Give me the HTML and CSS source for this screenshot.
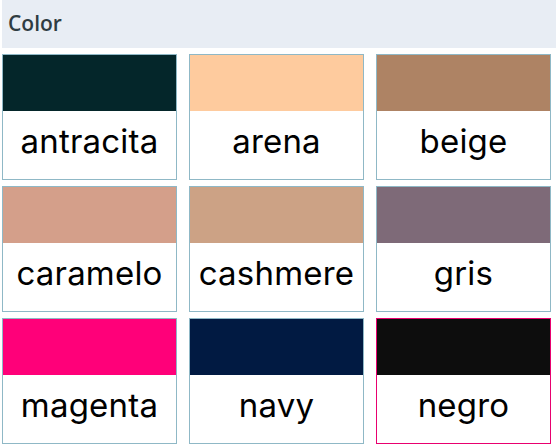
FILE: index.html
```html
<!DOCTYPE html>
<html lang="es">
<head>
    <meta charset="UTF-8">
    <meta name="viewport" content="width=device-width, initial-scale=1.0">
    <title>Color</title>
    <link rel="stylesheet" href="styles.css">
</head>
<body>
    <div class="filter">
        <div class="filter-title">Color</div>
        <div class="swatches">
            <div class="swatch"><div class="chip" style="background:#04262a"></div><div class="name">antracita</div></div>
            <div class="swatch"><div class="chip" style="background:#fecb9e"></div><div class="name">arena</div></div>
            <div class="swatch"><div class="chip" style="background:#ae8364"></div><div class="name">beige</div></div>
            <div class="swatch"><div class="chip" style="background:#d49f8a"></div><div class="name">caramelo</div></div>
            <div class="swatch"><div class="chip" style="background:#cca285"></div><div class="name">cashmere</div></div>
            <div class="swatch"><div class="chip" style="background:#7e6a78"></div><div class="name">gris</div></div>
            <div class="swatch"><div class="chip" style="background:#ff0079"></div><div class="name">magenta</div></div>
            <div class="swatch"><div class="chip" style="background:#011a42"></div><div class="name">navy</div></div>
            <div class="swatch selected"><div class="chip" style="background:#0d0d0d"></div><div class="name">negro</div></div>
        </div>
    </div>
</body>
</html>
```

FILE: styles.css
```css
body {
    margin: 0;
    background: #fff;
}
.filter {
    padding-left: 2px;
}
.filter-title {
    background-color: #e8edf4;
    height: 48px;
    padding-left: 6px;
    line-height: 46px;
    font-family: "Open Sans", sans-serif;
    font-weight: 600;
    font-size: 21px;
    color: #2f3c42;
}
.swatches {
    display: grid;
    grid-template-columns: repeat(3, 175px);
    column-gap: 12px;
    row-gap: 6px;
    margin-top: 6px;
}
.swatch {
    border: 1px solid #8fb8c6;
    height: 124px;
    display: flex;
    flex-direction: column;
}
.swatch.selected {
    border-color: #e8006f;
}
.chip {
    height: 56px;
}
.name {
    flex: 1;
    display: flex;
    align-items: center;
    justify-content: center;
    font-family: Inter, sans-serif;
    font-size: 33px;
    letter-spacing: 0.2px;
    color: #000;
    padding-bottom: 8px;
}
```
